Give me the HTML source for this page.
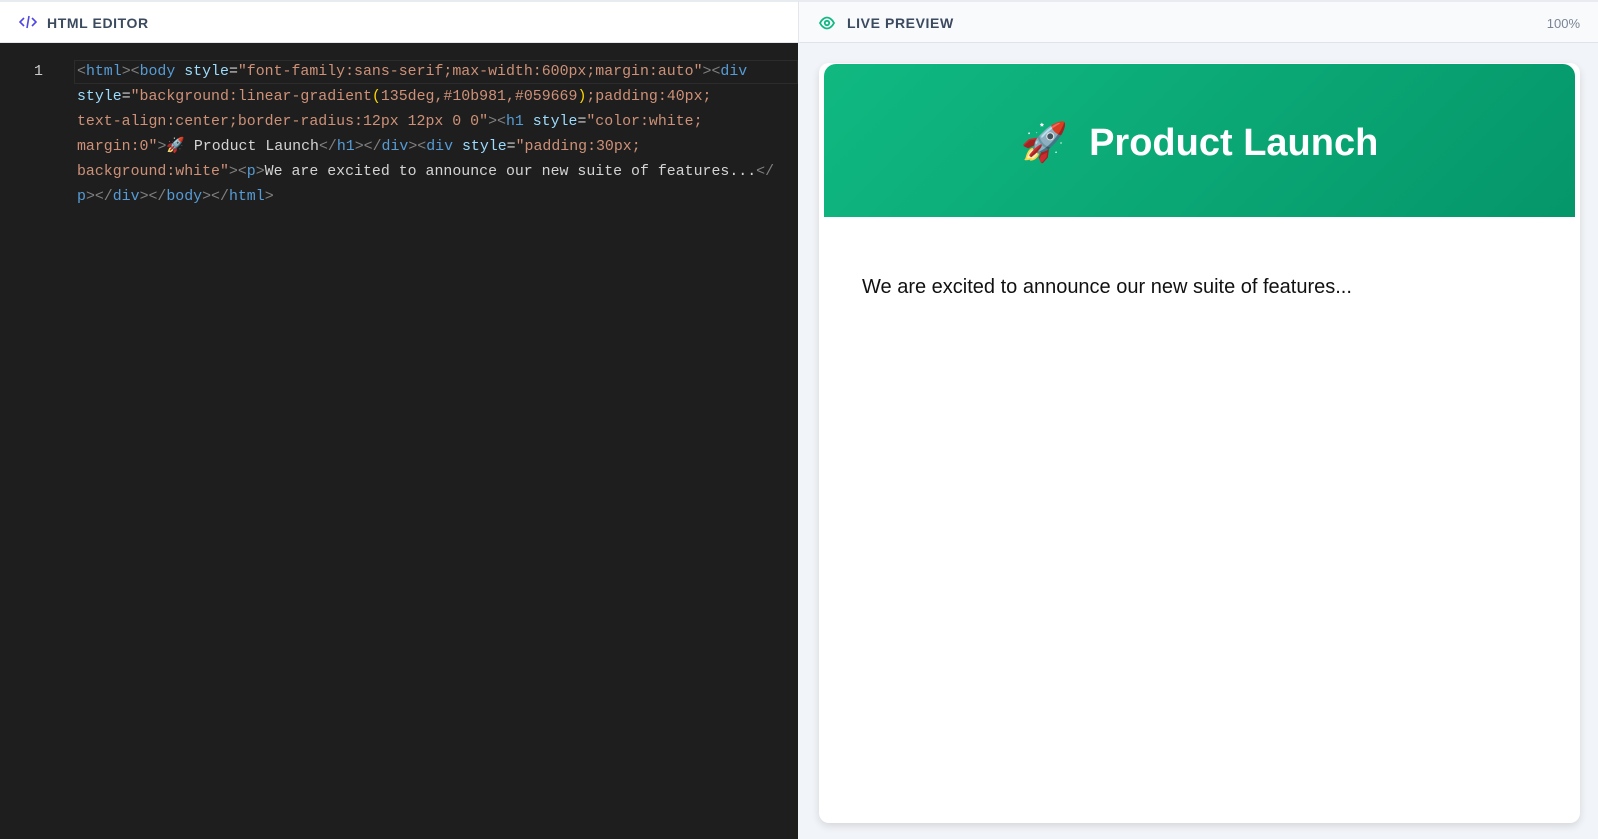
<!DOCTYPE html>
<html><head><meta charset="utf-8"><style>
*{margin:0;padding:0;box-sizing:border-box}
body{width:1598px;height:839px;overflow:hidden;background:#f1f4f8;font-family:"Liberation Sans",sans-serif;position:relative}
.ed{position:absolute;left:0;top:0;width:798px;height:839px;background:#1e1e1e}
.edh{position:absolute;left:0;top:0;width:798px;height:43px;background:#fff;border-top:2px solid #e8ecf0;border-bottom:1px solid #e3e7ec}
.pvh{position:absolute;left:798px;top:0;width:800px;height:43px;background:#f9fafc;border-top:2px solid #e8ecf0;border-bottom:1px solid #dfe4ea;border-left:1px solid #e3e7ec}
.lbl{position:absolute;top:13px;font-size:14px;font-weight:bold;letter-spacing:.6px;color:#3b4a5e}
.code{position:absolute;left:77px;top:60px;font-family:"Liberation Mono",monospace;font-size:14.9px;line-height:25.1px;white-space:pre;color:#ce9178}
.ln{position:absolute;left:34px;top:60px;font-family:"Liberation Mono",monospace;font-size:14.9px;line-height:25.1px;color:#ccc}
.hl{position:absolute;left:74px;top:60px;width:724px;height:24px;border:1px solid #2c2c2c}
.t{color:#569cd6}.g{color:#808080}.a{color:#9cdcfe}.w{color:#d4d4d4}.y{color:#ffd700}
.card{position:absolute;left:819px;top:63px;width:761px;height:760px;background:#fff;border-radius:10px;box-shadow:0 3px 8px rgba(0,0,0,.12)}
.hero{position:absolute;left:824px;top:64px;width:751px;height:153px;background:linear-gradient(135deg,#10b981,#059669);border-radius:12px 12px 0 0;color:#fff;text-align:center;font-size:38px;font-weight:bold;line-height:159px}
.p{position:absolute;left:862px;top:276px;font-size:20px;color:#111}
</style></head><body>
<div class="ed"></div>
<div class="edh"><svg style="position:absolute;left:19px;top:13px" width="18" height="14" viewBox="0 0 18 14" fill="none" stroke="#4f46e5" stroke-width="1.6"><path d="M5 3L1 7l4 4M13 3l4 4-4 4M10 1L8 13"/></svg><div class="lbl" style="left:47px">HTML EDITOR</div></div>
<div class="pvh"><svg style="position:absolute;left:20px;top:14px" width="16" height="14" viewBox="0 0 16 14" fill="none" stroke="#10b981" stroke-width="1.8"><path d="M1 7c2-4 5-5.5 7-5.5S13 3 15 7c-2 4-5 5.5-7 5.5S3 11 1 7z"/><circle cx="8" cy="7" r="2.2"/></svg><div class="lbl" style="left:48px">LIVE PREVIEW</div><div style="position:absolute;right:18px;top:14px;font-size:13px;color:#7a8594">100%</div></div>
<div class="hl"></div>
<div class="ln">1</div>
<div class="code"><span class="g">&lt;</span><span class="t">html</span><span class="g">&gt;&lt;</span><span class="t">body</span> <span class="a">style</span><span class="w">=</span>"font-family:sans-serif;max-width:600px;margin:auto"<span class="g">&gt;&lt;</span><span class="t">div</span>
<span class="a">style</span><span class="w">=</span>"background:linear-gradient<span class="y">(</span>135deg,#10b981,#059669<span class="y">)</span>;padding:40px;
text-align:center;border-radius:12px 12px 0 0"<span class="g">&gt;&lt;</span><span class="t">h1</span> <span class="a">style</span><span class="w">=</span>"color:white;
margin:0"<span class="g">&gt;</span><span class="w">🚀 Product Launch</span><span class="g">&lt;/</span><span class="t">h1</span><span class="g">&gt;&lt;/</span><span class="t">div</span><span class="g">&gt;&lt;</span><span class="t">div</span> <span class="a">style</span><span class="w">=</span>"padding:30px;
background:white"<span class="g">&gt;&lt;</span><span class="t">p</span><span class="g">&gt;</span><span class="w">We are excited to announce our new suite of features...</span><span class="g">&lt;/</span>
<span class="t">p</span><span class="g">&gt;&lt;/</span><span class="t">div</span><span class="g">&gt;&lt;/</span><span class="t">body</span><span class="g">&gt;&lt;/</span><span class="t">html</span><span class="g">&gt;</span></div>
<div class="card"></div>
<div class="hero">🚀&nbsp; Product Launch</div>
<div class="p">We are excited to announce our new suite of features...</div>
</body></html>
